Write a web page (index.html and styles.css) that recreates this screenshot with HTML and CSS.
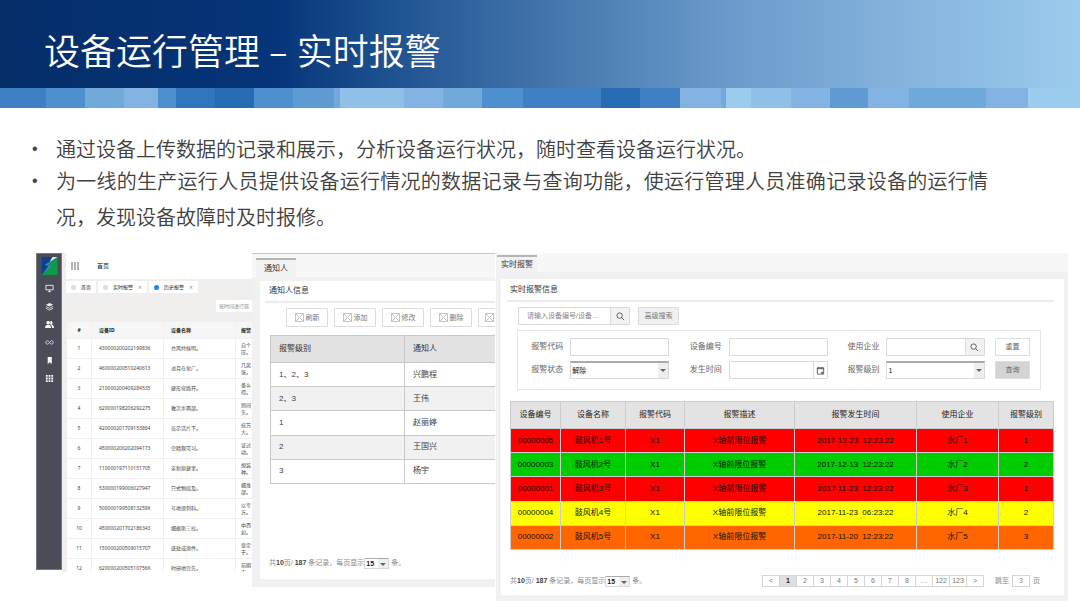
FILE: index.html
```
<!DOCTYPE html>
<html lang="zh-CN">
<head>
<meta charset="utf-8">
<title>设备运行管理 – 实时报警</title>
<link rel="stylesheet" href="styles.css">
</head>
<body>
<header class="banner"><h1>设备运行管理 – 实时报警</h1></header>
<svg class="strip" viewBox="0 0 1080 20" preserveAspectRatio="none" aria-hidden="true">
<rect width="1080" height="20" fill="#3f80c4"/>
<rect x="46" width="39" height="20" fill="#4e90cf"/><rect x="85" width="39" height="20" fill="#72a9db"/>
<rect x="124" width="34" height="20" fill="#82b3e3"/><rect x="158" width="18" height="20" fill="#4e90cf"/>
<rect x="176" width="39" height="20" fill="#2f74bd"/><rect x="215" width="39" height="20" fill="#276bb3"/>
<rect x="254" width="39" height="20" fill="#4e90cf"/><rect x="293" width="41" height="20" fill="#5f9bd3"/>
<rect x="334" width="6" height="20" fill="#72a9db"/><rect x="340" width="64" height="20" fill="#90c0e8"/>
<rect x="404" width="39" height="20" fill="#82b3e3"/><rect x="443" width="39" height="20" fill="#72a9db"/>
<rect x="482" width="41" height="20" fill="#4e90cf"/><rect x="601" width="39" height="20" fill="#276bb3"/>
<rect x="680" width="41" height="20" fill="#82b3e3"/><rect x="721" width="5" height="20" fill="#72a9db"/>
<rect x="726" width="25" height="20" fill="#9bcced"/><rect x="751" width="40" height="20" fill="#90c0e8"/>
<rect x="791" width="39" height="20" fill="#82b3e3"/><rect x="830" width="38" height="20" fill="#5f9bd3"/>
<rect x="868" width="41" height="20" fill="#82b3e3"/><rect x="909" width="77" height="20" fill="#6fa8db"/>
<rect x="986" width="42" height="20" fill="#82b3e3"/><rect x="1028" width="52" height="20" fill="#9bcced"/>
</svg>
<ul class="points">
<li>通过设备上传数据的记录和展示，分析设备运行状况，随时查看设备运行状况。</li>
<li>为一线的生产运行人员提供设备运行情况的数据记录与查询功能，使运行管理人员准确记录设备的运行情况，发现设备故障时及时报修。</li>
</ul>
<main class="shots">
<section class="history">
<nav class="side">
<svg class="logo" viewBox="0 0 16 18"><rect width="16" height="18" fill="#0d9a4a"/><path d="M0 0h16L6 8l5 1L0 18z" fill="#0a3f96"/><path d="M16 0 6 8l5 1L0 18l7-9-4-1z" fill="#3d8f9a"/><path d="M11 0h5L8 5z" fill="#e4eef0"/></svg>
<svg viewBox="0 0 10 10"><path d="M1 1.500h8v5H1zM5 6.500v2M3.500 8.500h3" fill="none" stroke="#eee"/></svg>
<svg viewBox="0 0 10 10"><path d="M5 1l4 2-4 2-4-2z" fill="#eee"/><path d="M1 5l4 2 4-2M1 7l4 2 4-2" fill="none" stroke="#ddd"/></svg>
<svg viewBox="0 0 10 10"><circle cx="3.500" cy="3" r="2" fill="#fff"/><path d="M0 9c0-5 7-5 7 0zM6 1c3 0 3 3 1 4 2 0 3 2 3 4H8c0-2-1-3-2-4z" fill="#fff"/></svg>
<svg viewBox="0 0 10 10"><path d="M5 5C3 2 1 3 1 5s2 3 4 0 4-2 4 0-2 3-4 0z" fill="none" stroke="#ddd"/></svg>
<svg viewBox="0 0 10 10"><path d="M3 1h4.500v8L5.300 7 3 9z" fill="#fff"/></svg>
<svg viewBox="0 0 10 10"><path d="M1 1h2v2H1zM4 1h2v2H4zM7 1h2v2H7zM1 4h2v2H1zM4 4h2v2H4zM7 4h2v2H7zM1 7h2v2H1zM4 7h2v2H4zM7 7h2v2H7z" fill="#fff"/></svg>
</nav>
<div class="hmain">
<div class="htop"><svg viewBox="0 0 8 8"><path d="M1 0v8M4 0v8M7 0v8" stroke="#666" fill="none"/></svg><span>首页</span></div>
<div class="htabs"><button><i></i>首页</button><button><i></i>实时报警<b>×</b></button><button><i class="on"></i>历史报警<b>×</b></button></div>
<div class="hsearch"><input aria-label="筛选" placeholder="按时间进行筛"></div>
<table class="htable">
<colgroup><col class="h1"><col class="h2"><col class="h2"><col class="h3"></colgroup>
<thead><tr><th>#</th><th>设备ID</th><th>设备名称</th><th>报警</th></tr></thead>
<tbody>
<tr><td>1</td><td>430000200202199836</td><td>台风特候明。</td><td>自个<br>压。</td></tr>
<tr><td>2</td><td>460000200510240613</td><td>派月在化广。</td><td>几离<br>张。</td></tr>
<tr><td>3</td><td>210000200409284535</td><td>建形党路开。</td><td>备么<br>得。</td></tr>
<tr><td>4</td><td>620000198206292275</td><td>教次步两部。</td><td>则间<br>头。</td></tr>
<tr><td>5</td><td>420000201709153864</td><td>员示活片下。</td><td>技万<br>大。</td></tr>
<tr><td>6</td><td>450000200202094173</td><td>空精观可习。</td><td>证过<br>动。</td></tr>
<tr><td>7</td><td>110000197110151705</td><td>亲新原建里。</td><td>想装<br>种。</td></tr>
<tr><td>8</td><td>530000199006027947</td><td>只式物段及。</td><td>细准<br>部。</td></tr>
<tr><td>9</td><td>50000019950813259X</td><td>号地须列科。</td><td>以专<br>方。</td></tr>
<tr><td>10</td><td>450000201702186343</td><td>细据斯三拉。</td><td>中西<br>如。</td></tr>
<tr><td>11</td><td>150000200509015707</td><td>盛处成须件。</td><td>查定<br>于。</td></tr>
<tr><td>12</td><td>62000020050510756X</td><td>时研地完先。</td><td>前期<br>市。</td></tr>
</tbody></table>
</div>
</section>

<section class="win notify">
<div class="tabbar"><button class="tab">通知人</button></div>
<div class="card">
<h2>通知人信息</h2>
<div class="tools">
<button><svg viewBox="0 0 9 9"><path d="M.5.5h8v8h-8zM.5.5l8 8M8.500.5l-8 8"/></svg>刷新</button>
<button><svg viewBox="0 0 9 9"><path d="M.5.5h8v8h-8zM.5.5l8 8M8.500.5l-8 8"/></svg>添加</button>
<button><svg viewBox="0 0 9 9"><path d="M.5.5h8v8h-8zM.5.5l8 8M8.500.5l-8 8"/></svg>修改</button>
<button><svg viewBox="0 0 9 9"><path d="M.5.5h8v8h-8zM.5.5l8 8M8.500.5l-8 8"/></svg>删除</button>
<button aria-label="更多"><svg viewBox="0 0 9 9"><path d="M.5.5h8v8h-8zM.5.5l8 8M8.500.5l-8 8"/></svg></button>
</div>
<table class="ntable">
<thead><tr><th>报警级别</th><th>通知人</th></tr></thead>
<tbody>
<tr><td>1、2、3</td><td>兴鹏程</td></tr>
<tr><td>2、3</td><td>王伟</td></tr>
<tr><td>1</td><td>赵丽婷</td></tr>
<tr><td>2</td><td>王国兴</td></tr>
<tr><td>3</td><td>杨宇</td></tr>
</tbody></table>
<div class="foot"><label for="size1">共<b>10</b>页/ <b>187</b> 条记录，每页显示</label><span class="sel small"><select id="size1"><option>15</option></select></span><span>&nbsp;条。</span></div>
</div>
</section>

<section class="win alarm">
<div class="tabbar"><button class="tab">实时报警</button></div>
<div class="card">
<h2>实时报警信息</h2>
<div class="search">
<span class="group"><input aria-label="搜索" placeholder="请输入设备编号/设备…"><button aria-label="搜索"><svg viewBox="0 0 10 10"><circle cx="4" cy="4" r="3"/><path d="M6 6l3 3"/></svg></button></span>
<button class="btn">高级搜索</button>
</div>
<form class="filter">
<label for="code">报警代码</label><input id="code">
<label for="dev">设备编号</label><input id="dev">
<label for="org">使用企业</label><span class="group"><input id="org"><button type="button" aria-label="选择企业"><svg viewBox="0 0 10 10"><circle cx="4" cy="4" r="3"/><path d="M6 6l3 3"/></svg></button></span>
<button type="reset" class="plain">重置</button>
<label for="state">报警状态</label><span class="sel"><select id="state"><option>解除</option></select></span>
<label for="time">发生时间</label><span class="group date"><input id="time"><button type="button" aria-label="选择日期"><svg viewBox="0 0 10 10"><path d="M1.500 2h7v7h-7zM1 3h8M3 1v2M7 1v2M6 7h2v1H6z"/></svg></button></span>
<label for="level">报警级别</label><span class="sel"><select id="level"><option>1</option></select></span>
<button type="button" class="query">查询</button>
</form>
<table class="atable">
<colgroup><col class="c1"><col class="c2"><col class="c3"><col class="c4"><col class="c5"><col class="c6"><col class="c7"></colgroup>
<thead><tr><th>设备编号</th><th>设备名称</th><th>报警代码</th><th>报警描述</th><th>报警发生时间</th><th>使用企业</th><th>报警级别</th></tr></thead>
<tbody>
<tr class="red"><td>00000005</td><td>鼓风机1号</td><td>X1</td><td>X轴前限位报警</td><td>2017-12-23&nbsp; 12:23:22</td><td>水厂1</td><td>1</td></tr>
<tr class="green"><td>00000003</td><td>鼓风机2号</td><td>X1</td><td>X轴前限位报警</td><td>2017-12-13&nbsp; 12:23:22</td><td>水厂2</td><td>2</td></tr>
<tr class="red"><td>00000001</td><td>鼓风机3号</td><td>X1</td><td>X轴前限位报警</td><td>2017-11-23&nbsp; 12:23:22</td><td>水厂3</td><td>1</td></tr>
<tr class="yellow"><td>00000004</td><td>鼓风机4号</td><td>X1</td><td>X轴前限位报警</td><td>2017-11-23&nbsp; 06:23:22</td><td>水厂4</td><td>2</td></tr>
<tr class="orange"><td>00000002</td><td>鼓风机5号</td><td>X1</td><td>X轴前限位报警</td><td>2017-11-20&nbsp; 12:23:22</td><td>水厂5</td><td>3</td></tr>
</tbody></table>
<div class="foot"><label for="size2">共<b>10</b>页/ <b>187</b> 条记录，每页显示</label><span class="sel small"><select id="size2"><option>15</option></select></span><span>&nbsp;条。</span>
<nav class="pager"><button>&lt;</button><button class="cur">1</button><button>2</button><button>3</button><button>4</button><button>5</button><button>6</button><button>7</button><button>8</button><button>…</button><button>122</button><button>123</button><button>&gt;</button></nav>
<label for="jump">跳至</label><input id="jump" class="jump" value="3"><span>页</span></div>
</div>
</section>
</main>
</body>
</html>
```
FILE: styles.css
```
* { box-sizing: border-box; }
body { margin: 0; background: #fff; color: #404040; font-family: "Liberation Sans", "Noto Sans CJK SC", sans-serif; }
button, input, select { font: inherit; color: inherit; margin: 0; padding: 0; border: 0; background: none; min-width: 0; border-radius: 0; }
svg { display: block; flex: none; }
table { border-collapse: collapse; table-layout: fixed; }
h1, h2 { margin: 0; font-weight: normal; }

.banner { height: 88px; padding: 26px 44px 0; background: linear-gradient(90deg, #052e69 0%, #053478 25%, #1b4f8e 35%, #4273aa 50%, #6a9acb 67%, #84b2dc 83%, #9bcbed 100%); }
.banner h1 { color: #fff; font-family: "Noto Sans", "Noto Sans CJK SC", sans-serif; font-weight: 350; font-size: 36px; line-height: 52px; }
.strip { width: 100%; height: 20px; }
.points { list-style: none; margin: 0; padding: 23px 92px 0 56px; font-family: "Noto Sans CJK SC", sans-serif; font-weight: 350; font-size: 20px; line-height: 36px; text-align: justify; }
.points li + li { margin-top: -4px; }
.points li::before { content: "•"; float: left; margin-left: -24px; font-family: "Liberation Sans", sans-serif; font-size: 16px; }

.shots { display: grid; grid-template-columns: 216fr 244fr 572fr; align-items: start; padding: 18px 12px 0 36px; font-size: 8px; line-height: 12px; }

.history { display: flex; height: 319px; overflow: hidden; font-family: "Noto Sans", "Noto Sans CJK SC", sans-serif; font-size: 5px; line-height: 7px; color: #444; }
.side { width: 26px; height: 317px; flex: none; background: #4a4d57; border: 1px solid #777983; display: flex; flex-direction: column; align-items: center; gap: 9px; padding-top: 3px; }
.side svg { width: 9px; height: 9px; }
.side .logo { width: 17px; height: 18px; }
.hmain { flex: 1; min-width: 0; border-left: 4px solid #f0efed; }
.htop { display: flex; align-items: center; gap: 18px; height: 26px; padding-left: 5px; font-size: 6px; color: #222; }
.htop svg { width: 8px; height: 8px; }
.htabs { display: flex; gap: 2px; height: 16px; padding: 2px 0; background: #f0efed; white-space: nowrap; }
.htabs button { display: flex; align-items: center; gap: 5px; padding: 0 5px; background: #fff; color: #222; }
.htabs i { width: 5px; height: 5px; border-radius: 50%; background: #ddd; }
.htabs i.on { background: #1a86ee; }
.htabs b { font-weight: normal; font-size: 7px; color: #999; }
.hsearch { display: flex; justify-content: flex-end; height: 26px; padding: 5px 0 9px; background: #f0efed; }
.hsearch input { width: 36px; padding-left: 3px; background: #fff; }
.htable { width: 186px; }
.htable .h1 { width: 25px; } .htable .h2 { width: 72px; } .htable .h3 { width: 17px; }
.htable th, .htable td { height: 20px; padding: 0 0 0 7px; border: 1px solid #f0f0f0; border-right: 0; text-align: left; font-weight: normal; white-space: nowrap; }
.htable th { height: 17px; background: #f6f6f6; color: #222; font-weight: bold; }
.htable th:first-child, .htable td:first-child { padding: 0; text-align: center; }
.htable th:last-child, .htable td:last-child { padding-left: 5px; }

.win { min-width: 0; overflow: hidden; background: #f1f1f1; }
.tabbar { background: #f7f7f7; }
.tab { display: block; border-top: 2px solid #b5b5b5; background: #f2f2f2; color: #333; }
.card { background: #fff; }
.card h2 { font-size: 8px; color: #333; border-bottom: 2px solid #ececec; }

.notify { height: 334px; border-top: 1px solid #c8c8c8; border-right: 1px solid #fff; }
.notify .tabbar { height: 23px; padding: 4px 0 0 4px; }
.notify .tab { height: 19px; padding: 0 8px; }
.notify .card { margin: 4px 0 0 8px; height: 298px; padding-left: 5px; }
.notify h2 { height: 22px; line-height: 20px; padding-left: 4px; }
.tools { display: flex; gap: 6px; padding: 5px 0 8px 21px; }
.tools button { display: flex; flex: none; align-items: center; justify-content: center; gap: 2px; width: 42px; height: 19px; border: 1px solid #dcdcdc; border-radius: 1px; font-size: 7px; color: #777; }
.tools svg { width: 9px; height: 9px; fill: none; stroke: #c4c4c4; stroke-width: 1px; }
.tools button:last-child { justify-content: flex-start; padding-left: 6px; }
.ntable { margin-left: 5px; width: 240px; height: 149px; }
.ntable th, .ntable td { border: 1px solid #c9c9c9; padding: 0 8px; text-align: left; font-weight: normal; }
.ntable th:first-child { width: 134px; }
.ntable th { height: 27px; background: #e2e2e2; color: #333; }
.ntable tr:nth-child(even) td { background: #f1f1f1; }
.foot { display: flex; align-items: center; font-size: 7px; color: #888; white-space: nowrap; }
.foot b { color: #444; }
.notify .foot { padding: 73px 0 0 4px; }

.sel { position: relative; display: flex; min-width: 0; height: 18px; border: 1px solid #d8d8d8; border-top: 2px solid #aaa; background: #fff; color: #222; }
.sel select { appearance: none; width: 100%; padding-left: 1px; font-size: 7px; }
.sel::after { content: ""; position: absolute; right: 0; top: 0; bottom: 0; width: 10px; pointer-events: none; background: #eee; }
.sel::before { content: ""; position: absolute; z-index: 1; right: 2px; top: 6px; border: 3px solid transparent; border-top-color: #666; border-bottom: 0; pointer-events: none; }
.sel.small { width: 25px; height: 11px; border-top-width: 1px; border-top-color: #aaa; }
.sel.small::before { top: 4px; }
.sel.small select { font-weight: bold; line-height: 9px; }

.alarm { height: 348px; padding-left: 1px; }
.alarm .tabbar { height: 19px; padding-top: 2px; }
.alarm .tab { height: 17px; padding: 0 4px; }
.alarm .card { margin: 7px 4px 0; height: 316px; padding: 0 10px 0 6px; }
.alarm h2 { height: 23px; line-height: 21px; padding-left: 3px; }
.search { display: flex; gap: 8px; padding: 5px 0 5px 11px; font-size: 7px; color: #777; }
.search .group { width: 112px; }
.group { display: flex; min-width: 0; height: 18px; border: 1px solid #d8d8d8; border-radius: 1px; }
.group input { flex: 1; padding-left: 8px; }
.group button { width: 19px; display: flex; align-items: center; justify-content: center; background: #f2f2f2; border-left: 1px solid #ddd; }
.group svg { width: 9px; height: 9px; fill: none; stroke: #555; }
.group.date button { width: 14px; background: #fff; }
::placeholder { color: #888; opacity: 1; }
.btn { width: 41px; height: 18px; border: 1px solid #dcdcdc; background: #f0f0f0; border-radius: 1px; }
.filter { display: grid; grid-template-columns: 32fr 98fr 46fr 99fr 44fr 98fr 38fr; column-gap: 7px; row-gap: 5px; margin: 0 13px 0 10px; padding: 7px 10px 10px 13px; border: 1px solid #e5e5e5; align-items: center; color: #666; }
.filter label { white-space: nowrap; text-align: right; }
.filter > input { width: 100%; height: 18px; border: 1px solid #d8d8d8; border-radius: 1px; }
.plain, .query { height: 18px; margin-left: 3px; border: 1px solid #ddd; border-radius: 1px; font-size: 7px; }
.query { background: #d4d4d4; }
.atable { margin: 11px 0 0 3px; width: calc(100% - 3px); height: 149px; color: #111; }
.atable .c1 { width: 50px; } .atable .c2 { width: 65px; } .atable .c3 { width: 59px; } .atable .c4 { width: 110px; } .atable .c5 { width: 122px; } .atable .c6 { width: 82px; } .atable .c7 { width: 55px; }
.atable th, .atable td { padding: 0; border: 1px solid #ccc; font-weight: normal; text-align: center; white-space: nowrap; }
.atable th { height: 27px; background: #e3e3e3; color: #222; }
.red { background: #f00; } .green { background: #0c0; } .yellow { background: #ff0; } .orange { background: #f60; }
.alarm .foot { padding: 25px 14px 0 3px; }
.pager { display: flex; margin: 0 11px 0 auto; }
.pager button { width: 18px; height: 12px; margin-left: -1px; border: 1px solid #d5d5d5; line-height: 10px; color: #777; }
.pager .cur { background: #e0e0e0; color: #222; font-weight: bold; }
.jump { width: 18px; height: 12px; margin: 0 3px; border: 1px solid #d5d5d5; text-align: center; }
```
